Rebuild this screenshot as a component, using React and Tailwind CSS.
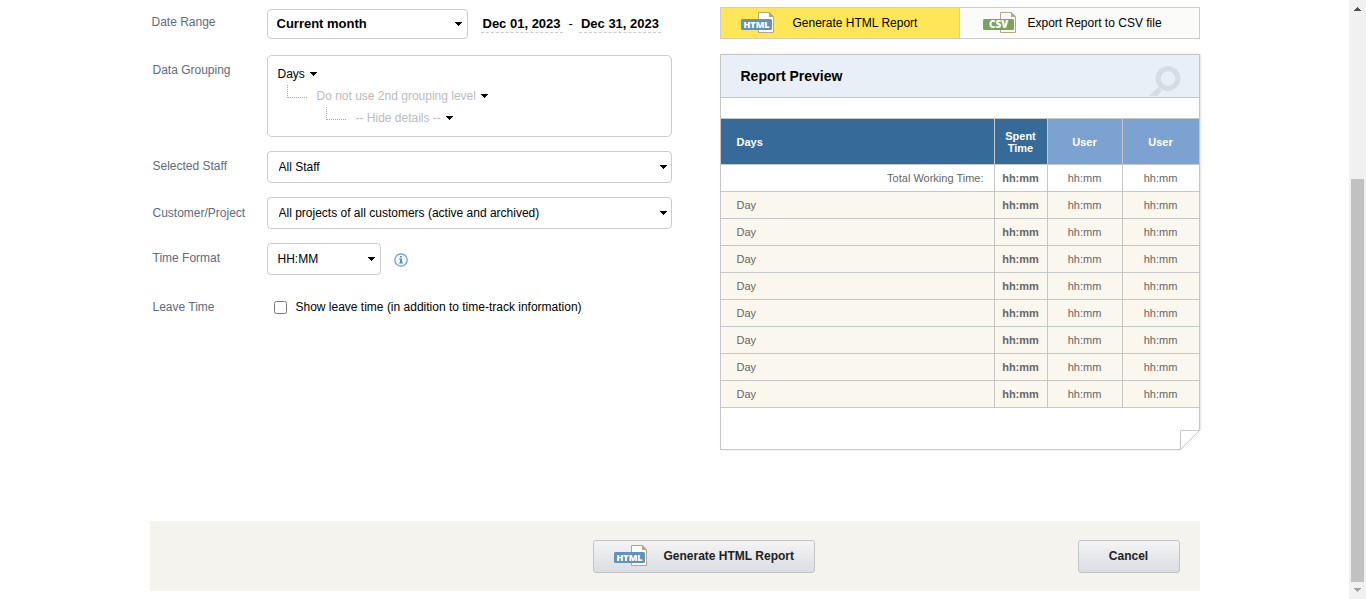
const font = 'font-["Liberation_Sans",Arial,sans-serif]';

function Arrow({ className = '' }) {
  return (
    <svg width="7" height="4" viewBox="0 0 7 4" className={`shrink-0 ${className}`} aria-hidden="true" shapeRendering="crispEdges">
      <path d="M0 0h7v1h-1v1h-1v1h-1v1h-1v-1h-1v-1h-1v-1h-1z" fill="#000" />
    </svg>
  );
}

function FileIcon({ label, color, size = 9 }) {
  return (
    <svg width="34" height="22" viewBox="0 0 34 22" className="shrink-0" aria-hidden="true">
      <path d="M17.500 0.500h11l4 4v16h-15z" fill="#fff" stroke="#b3a684" />
      <path d="M28 0l5 5h-5z" fill="#b3a684" />
      <rect x="0" y="7" width="31" height="11" rx="1.500" fill={color} />
      <text x="15.500" y="16" textAnchor="middle" fill="#fff" fontSize={size} fontWeight="800" fontFamily="Open Sans, sans-serif">{label}</text>
    </svg>
  );
}

function Select({ id, value, className = '', text = 'pl-2.5 text-[12px]', arrow = 'right-1.5' }) {
  return (
    <div className={`relative ${className}`}>
      <select id={id} defaultValue={value} className={`block h-full w-full appearance-none rounded border border-[#cccccc] bg-white pr-6 text-black ${text}`}>
        <option>{value}</option>
      </select>
      <Arrow className={`pointer-events-none absolute top-1/2 -translate-y-1/2 ${arrow}`} />
    </div>
  );
}

function Row({ label, htmlFor, className = '', labelClass = 'pt-[7px] pl-px', children }) {
  const Tag = htmlFor ? 'label' : 'span';
  return (
    <div className={`flex items-start ${className}`}>
      <Tag htmlFor={htmlFor} className={`w-[115px] shrink-0 leading-4 text-[#5d6b80] ${labelClass}`}>{label}</Tag>
      <div className="min-w-0 flex-1">{children}</div>
    </div>
  );
}

function Branch() {
  return <span className="mt-[3px] h-[13px] w-5 shrink-0 border-b border-l border-dotted border-[#aaaaaa]" />;
}

const groupButton = 'flex items-center gap-[5px] leading-4';

export default function App() {
  return (
    <div className={`flex min-h-screen bg-white text-[12px] text-black ${font}`}>
      <main className="min-w-0 flex-1">
        <div className="mx-auto w-full max-w-[1050px]">
          <div className="flex gap-12 pt-[7px]">
            <form className="min-w-0 flex-1 pt-0.5 pl-0.5">
              <Row label="Date Range" htmlFor="range" labelClass="pt-[5px]">
                <div className="flex items-center text-[13px] font-bold">
                  <Select id="range" value="Current month" className="h-[30px] w-[201px]" text="pl-[9px] text-[13px] font-bold" />
                  <button type="button" className="ml-[13px] border-b border-dashed border-[#cccccc] px-0.5 leading-4 font-bold">Dec 01, 2023</button>
                  <span className="mx-1.5 font-normal">-</span>
                  <button type="button" className="border-b border-dashed border-[#cccccc] px-0.5 leading-4 font-bold">Dec 31, 2023</button>
                </div>
              </Row>
              <Row label="Data Grouping" className="mt-4">
                <div className="h-[82px] rounded-[5px] border border-[#cccccc] px-2.5 pt-2.5">
                  <button type="button" className={groupButton}>Days<Arrow /></button>
                  <div className="ml-[9px] flex h-[22px] items-start gap-2.5">
                    <Branch />
                    <button type="button" className={`mt-1.5 text-[#bbbbbb] ${groupButton}`}>Do not use 2nd grouping level<Arrow /></button>
                  </div>
                  <div className="ml-12 flex h-[22px] items-start gap-2.5">
                    <Branch />
                    <button type="button" className={`mt-1.5 text-[#bbbbbb] ${groupButton}`}>-- Hide details --<Arrow /></button>
                  </div>
                </div>
              </Row>
              <Row label="Selected Staff" htmlFor="staff" className="mt-3.5">
                <Select id="staff" value="All Staff" className="h-8" text="pl-[11px] text-[12px]" arrow="right-[5px]" />
              </Row>
              <Row label="Customer/Project" htmlFor="project" className="mt-3.5" labelClass="pt-2 pl-px">
                <Select id="project" value="All projects of all customers (active and archived)" className="h-8" text="pl-[11px] text-[12px]" arrow="right-[5px]" />
              </Row>
              <Row label="Time Format" htmlFor="format" className="mt-3.5">
                <div className="flex items-center gap-[13px]">
                  <Select id="format" value="HH:MM" className="h-8 w-[114px]" />
                  <svg width="14" height="15" viewBox="0 -1 14 15" aria-hidden="true">
                    <circle cx="7" cy="7" r="6.2" fill="#f4f8fc" stroke="#6b9ac4" strokeWidth="1.2" />
                    <path d="M6 3h2v1.6H6zM5 5.6h3v4h1v1H5v-1h1V6.6H5z" fill="#5f90bd" />
                  </svg>
                </div>
              </Row>
              <Row label="Leave Time" className="mt-4" labelClass="pt-2 pl-px">
                <label className="flex h-8 items-center gap-[9px] pl-[7px]">
                  <input type="checkbox" className="size-[13px]" />
                  Show leave time (in addition to time-track information)
                </label>
              </Row>
            </form>

            <section className="w-[480px] shrink-0">
              <div className="flex h-8 border border-[#cccccc]">
                <button type="button" className="flex flex-1 items-center gap-[18px] bg-[#ffe658] pl-5">
                  <FileIcon label="HTML" color="#5f93b9" />
                  Generate HTML Report
                </button>
                <button type="button" className="flex w-[240px] items-center gap-[11px] border-l border-[#cccccc] bg-[#fbfbf9] pl-[23px]">
                  <FileIcon label="CSV" color="#77a55f" size={10} />
                  Export Report to CSV file
                </button>
              </div>

              <div className="relative mt-[15px] border border-[#c6c6c6] pb-[41px] shadow-[1px_0_2px_rgba(0,0,0,0.12)]">
                <div className="flex h-[43px] items-center justify-between overflow-hidden border-b border-[#c6c6c6] bg-[#e8eff7] pr-[18px] pl-5">
                  <h2 className="text-[14px] font-bold">Report Preview</h2>
                  <svg width="32" height="30" viewBox="0 0 32 30" className="mt-[11px] self-start" aria-hidden="true">
                    <circle cx="19" cy="12.500" r="9.800" fill="none" stroke="#d5dce4" strokeWidth="5.200" />
                    <path d="M9.500 21l3.500 3.500-5 5.500H0z" fill="#d5dce4" />
                  </svg>
                </div>
                <table className="mt-5 w-full table-fixed border-separate border-spacing-0 border-t border-[#c6c6c6] text-[11px] leading-3 text-[#666666]">
                  <colgroup>
                    <col />
                    <col className="w-[53px]" />
                    <col className="w-[75px]" />
                    <col className="w-[76px]" />
                  </colgroup>
                  <thead>
                    <tr className="h-[46px] text-white">
                      <th className="border-r border-b border-[#c6c6c6] bg-[#356a99] pl-4 text-left">Days</th>
                      <th className="border-r border-b border-[#c6c6c6] bg-[#356a99]">Spent Time</th>
                      <th className="border-r border-b border-[#c6c6c6] bg-[#7ba2d1]">User</th>
                      <th className="border-b border-[#c6c6c6] bg-[#7ba2d1]">User</th>
                    </tr>
                  </thead>
                  <tbody>
                    {['Total Working Time:', ...Array(8).fill('Day')].map((name, i) => (
                      <tr key={i} className={i === 0 ? 'h-[27px] text-center' : 'h-[27px] bg-[#faf7ef] text-center'}>
                        <td className={`border-r border-b border-[#c6c6c6] ${i === 0 ? 'pr-2.5 text-right' : 'pl-4 text-left'}`}>{name}</td>
                        <td className="border-r border-b border-[#c6c6c6] font-bold">hh:mm</td>
                        <td className="border-r border-b border-[#c6c6c6]">hh:mm</td>
                        <td className="border-b border-[#c6c6c6]">hh:mm</td>
                      </tr>
                    ))}
                  </tbody>
                </table>
                <svg width="23" height="23" viewBox="0 0 23 23" className="absolute -right-1 -bottom-1" aria-hidden="true">
                  <path d="M0 0H19.500L0 19.500V23H23V0Z" fill="#fff" />
                  <path d="M19.500 0.500H0.500V19.500Z" fill="#fff" stroke="#c6c6c6" />
                </svg>
              </div>
            </section>
          </div>

          <footer className="mt-[71px] flex h-[70px] items-center justify-end gap-[263px] bg-[#f4f3ee] pr-5 text-[#222222]">
            <button type="button" className="flex h-[33px] w-[222px] items-center gap-4 rounded-[3px] border border-[#c2c4c6] bg-linear-to-b from-[#f4f4f5] to-[#dbdde1] pl-5 font-bold">
              <FileIcon label="HTML" color="#5f93b9" />
              Generate HTML Report
            </button>
            <button type="button" className="h-[33px] w-[102px] rounded-[3px] border border-[#c2c4c6] bg-linear-to-b from-[#f4f4f5] to-[#dbdde1] font-bold">Cancel</button>
          </footer>
        </div>
      </main>

      <div className="sticky top-0 flex h-screen w-[17px] shrink-0 flex-col items-center bg-[#f1f1f1]" aria-hidden="true">
        <svg width="7" height="4" viewBox="0 0 7 4" className="mt-[7px]" shapeRendering="crispEdges">
          <path d="M3 0h1v1h1v1h1v1h1v1H0V3h1V2h1V1h1z" fill="#505050" />
        </svg>
        <div className="grow-[168]" />
        <div className="w-[13px] grow-[403] bg-[#c1c1c1]" />
        <svg width="7" height="4" viewBox="0 0 7 4" className="mt-1.5 mb-[7px]" shapeRendering="crispEdges">
          <path d="M0 0h7v1H6v1H5v1H4v1H3V3H2V2H1V1H0z" fill="#a3a3a3" />
        </svg>
      </div>
    </div>
  );
}
